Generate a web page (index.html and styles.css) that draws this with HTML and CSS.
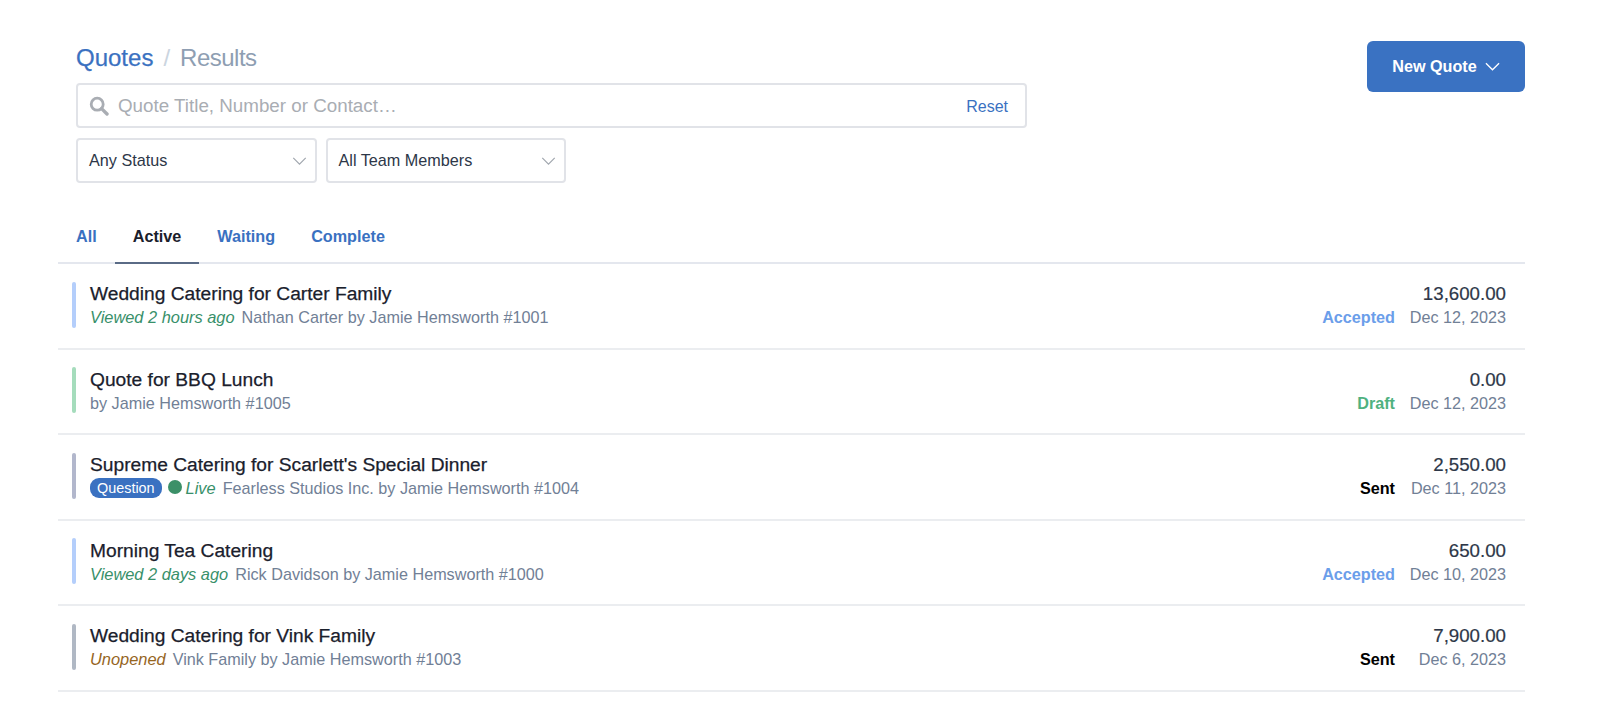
FILE: index.html
```html
<!DOCTYPE html>
<html lang="en">
<head>
  <meta charset="UTF-8" />
  <title>Quotes</title>
  <link rel="stylesheet" href="styles.css">
</head>
<body>
  <div class="page">
    <div class="top">
      <div class="filters">
        <h1 class="crumbs"><a class="crumb-link">Quotes</a><span class="crumb-sep">/</span><span class="crumb-current">Results</span></h1>
        <div class="search">
          <svg class="search-icon" viewBox="0 0 20 20" width="20" height="20"><circle cx="8.2" cy="8.2" r="6" fill="none" stroke="#a9adb3" stroke-width="2.8"/><path d="M12.6 12.6 L18 18" stroke="#a9adb3" stroke-width="3.4" stroke-linecap="round"/></svg>
          <span class="search-text">Quote Title, Number or Contact…</span>
          <a class="reset">Reset</a>
        </div>
        <div class="selects">
          <div class="select">Any Status
            <svg class="select-arrow" viewBox="0 0 16 9" width="15" height="8"><path d="M1 1 L8 8 L15 1" fill="none" stroke="#a0a6ae" stroke-width="1.3"/></svg>
          </div>
          <div class="select">All Team Members
            <svg class="select-arrow" viewBox="0 0 16 9" width="15" height="8"><path d="M1 1 L8 8 L15 1" fill="none" stroke="#a0a6ae" stroke-width="1.3"/></svg>
          </div>
        </div>
      </div>
      <button class="new-quote">New Quote
        <svg viewBox="0 0 16 9" width="15" height="9"><path d="M1 1 L8 8 L15 1" fill="none" stroke="#fff" stroke-width="1.4"/></svg>
      </button>
    </div>

    <div class="tabs">
      <a class="tab">All</a>
      <a class="tab active">Active</a>
      <a class="tab">Waiting</a>
      <a class="tab">Complete</a>
    </div>

    <div class="row">
      <div class="bar bar-blue"></div>
      <div class="main">
        <div class="title">Wedding Catering for Carter Family</div>
        <div class="sub"><em class="viewed">Viewed 2 hours ago</em>Nathan Carter by Jamie Hemsworth #1001</div>
      </div>
      <div class="side">
        <div class="amount">13,600.00</div>
        <div class="meta"><span class="status accepted">Accepted</span><span class="date">Dec 12, 2023</span></div>
      </div>
    </div>

    <div class="row">
      <div class="bar bar-green"></div>
      <div class="main">
        <div class="title">Quote for BBQ Lunch</div>
        <div class="sub">by Jamie Hemsworth #1005</div>
      </div>
      <div class="side">
        <div class="amount">0.00</div>
        <div class="meta"><span class="status draft">Draft</span><span class="date">Dec 12, 2023</span></div>
      </div>
    </div>

    <div class="row">
      <div class="bar bar-purple"></div>
      <div class="main">
        <div class="title">Supreme Catering for Scarlett's Special Dinner</div>
        <div class="sub"><span class="pill">Question</span><span class="dot"></span><em class="viewed">Live</em>Fearless Studios Inc. by Jamie Hemsworth #1004</div>
      </div>
      <div class="side">
        <div class="amount">2,550.00</div>
        <div class="meta"><span class="status sent">Sent</span><span class="date">Dec 11, 2023</span></div>
      </div>
    </div>

    <div class="row">
      <div class="bar bar-blue"></div>
      <div class="main">
        <div class="title">Morning Tea Catering</div>
        <div class="sub"><em class="viewed">Viewed 2 days ago</em>Rick Davidson by Jamie Hemsworth #1000</div>
      </div>
      <div class="side">
        <div class="amount">650.00</div>
        <div class="meta"><span class="status accepted">Accepted</span><span class="date">Dec 10, 2023</span></div>
      </div>
    </div>

    <div class="row">
      <div class="bar bar-gray"></div>
      <div class="main">
        <div class="title">Wedding Catering for Vink Family</div>
        <div class="sub"><em class="unopened">Unopened</em>Vink Family by Jamie Hemsworth #1003</div>
      </div>
      <div class="side">
        <div class="amount">7,900.00</div>
        <div class="meta"><span class="status sent">Sent</span><span class="date">Dec 6, 2023</span></div>
      </div>
    </div>
  </div>
</body>
</html>
```

FILE: styles.css
```css
body {
  margin: 0;
  background: #fff;
  color: #1a202c;
  font-family: "Liberation Sans", Arial, sans-serif;
}
.page {
  padding: 41px 75px 0 58px;
}
.top {
  display: flex;
  justify-content: space-between;
  align-items: flex-start;
  padding-left: 18px;
}
.filters {
  width: 951px;
}
.crumbs {
  margin: 0 0 9px;
  height: 33px;
  font-size: 24px;
  font-weight: normal;
  line-height: 33px;
}
.crumb-link {
  color: #3a71c1;
  -webkit-text-stroke: 0.25px #3a71c1;
}
.crumb-sep {
  margin: 0 10px;
  color: #cbd5e0;
}
.crumb-current {
  color: #8e9eb2;
  letter-spacing: -0.5px;
}
.search {
  display: flex;
  align-items: center;
  box-sizing: border-box;
  height: 45px;
  padding: 0 17px 0 11px;
  border: 2px solid #e1e3e8;
  border-radius: 4px;
}
.search-icon {
  margin-right: 9px;
}
.search-text {
  flex: 1;
  color: #a9adb3;
  font-size: 18.8px;
}
.reset {
  padding-top: 2px;
  color: #3a71c1;
  font-size: 16px;
}
.selects {
  display: flex;
  gap: 9px;
  margin-top: 10px;
}
.select {
  display: flex;
  align-items: center;
  justify-content: space-between;
  box-sizing: border-box;
  width: 240.5px;
  height: 45px;
  padding: 0 8px 0 11px;
  border: 2px solid #e1e3e8;
  border-radius: 4px;
  color: #2d3748;
  font-size: 16.2px;
}
.new-quote {
  display: flex;
  align-items: center;
  justify-content: center;
  gap: 8px;
  width: 158px;
  height: 51px;
  border: 0;
  border-radius: 6px;
  background: #3a72c2;
  color: #fff;
  font-family: inherit;
  font-size: 16.2px;
  font-weight: bold;
}
.tabs {
  display: flex;
  margin-top: 31px;
  border-bottom: 2px solid #e4e7ee;
}
.tab {
  margin-bottom: -2px;
  padding: 13px 18px 17px;
  border-bottom: 2px solid transparent;
  color: #3a71c1;
  font-size: 16.2px;
  font-weight: bold;
  line-height: 18px;
}
.tab.active {
  border-bottom-color: #5a6b86;
  color: #1a202c;
}
.row {
  display: flex;
  align-items: center;
  box-sizing: border-box;
  height: 85.5px;
  padding: 0 19px 2px 14px;
  border-bottom: 2px solid #ebedf0;
}
.bar {
  flex: none;
  width: 4px;
  height: 46px;
  margin-right: 14px;
  border-radius: 2px;
}
.bar-blue {
  background: #b4cefb;
}
.bar-green {
  background: #a5dcbc;
}
.bar-purple {
  background: #b2b7cc;
}
.bar-gray {
  background: #b0b8c4;
}
.main {
  flex: 1;
}
.title {
  font-size: 19.2px;
  line-height: 25px;
  -webkit-text-stroke: 0.25px #1a202c;
}
.sub {
  display: flex;
  align-items: center;
  color: #718096;
  font-size: 16.2px;
  line-height: 22px;
}
.sub em {
  margin-right: 7px;
  font-size: 16.4px;
}
.viewed {
  color: #38906a;
}
.unopened {
  color: #96661f;
}
.pill {
  margin-right: 6px;
  padding: 0 7px;
  border-radius: 9px;
  background: #3a71c1;
  color: #fff;
  font-size: 14.4px;
  line-height: 20px;
}
.dot {
  width: 14px;
  height: 14px;
  margin: 0 4px 3px 0;
  border-radius: 50%;
  background: #3c9068;
}
.side {
  text-align: right;
}
.amount {
  color: #2d3748;
  font-size: 18.7px;
  line-height: 25px;
  -webkit-text-stroke: 0.2px #2d3748;
}
.meta {
  display: flex;
  justify-content: flex-end;
  font-size: 16.2px;
  line-height: 22px;
}
.date {
  width: 111px;
  color: #718096;
}
.status {
  font-weight: bold;
}
.accepted {
  color: #6b9eea;
}
.draft {
  color: #4fb17f;
}
.sent {
  color: #000;
}
```
